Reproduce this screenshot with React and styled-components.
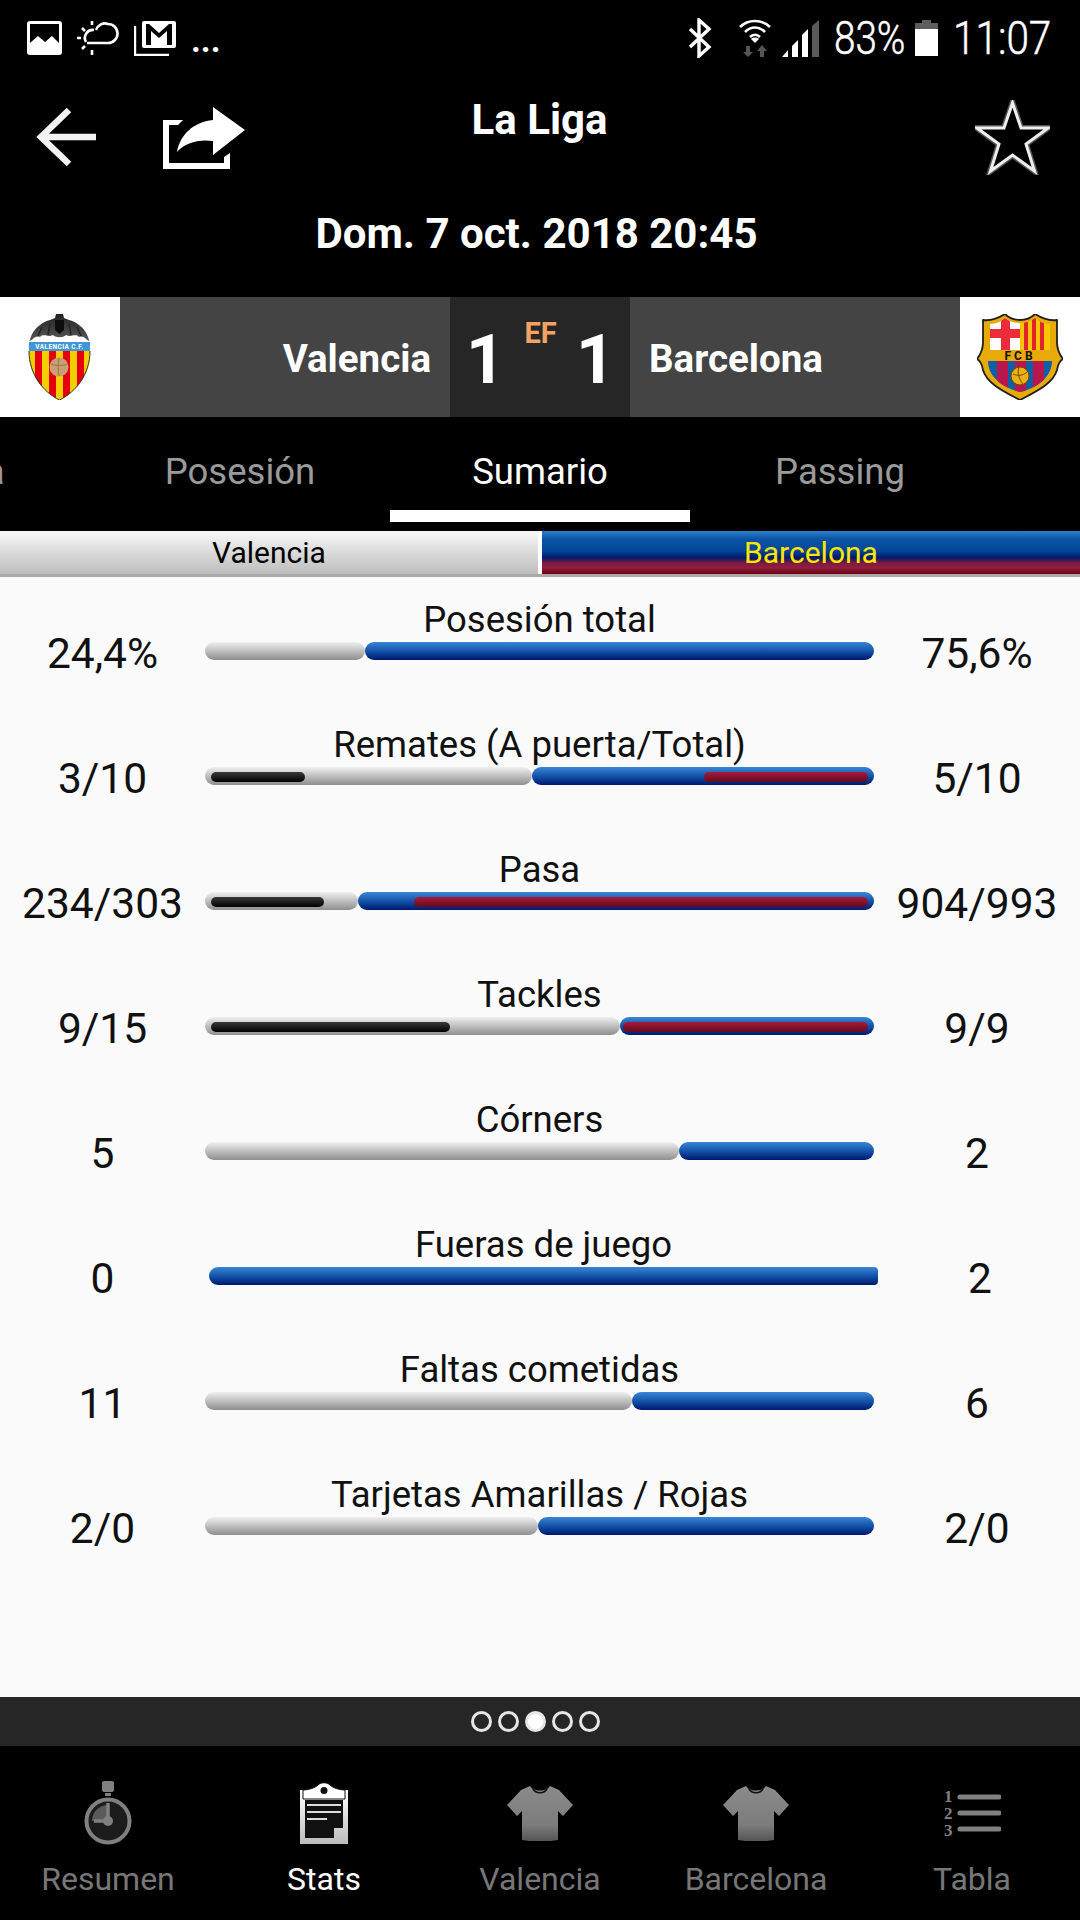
import React from 'react'
import styled, { createGlobalStyle } from 'styled-components'

const Global = createGlobalStyle`
	html, body {
		margin: 0;
		padding: 0;
		background: #000;
	}
	* {
		box-sizing: border-box;
	}
`

const Page = styled.div`
	width: 1080px;
	height: 1920px;
	display: flex;
	flex-direction: column;
	overflow: hidden;
	background: #000;
	font-family: Roboto, "Noto Sans", sans-serif;
`

const StatusBar = styled.div`
	height: 60px;
	display: flex;
	align-items: center;
	padding: 16px 30px 0 27px;
	color: #fff;
`

const StatusLeft = styled.div`
	display: flex;
	align-items: center;
	gap: 15px;
	flex: 1;
`

const Dots = styled.span`
	font-size: 34px;
	font-weight: 700;
	line-height: 34px;
	margin-top: 4px;
`

const StatusRight = styled.div`
	display: flex;
	align-items: center;
`

const Gap = styled.span`
	width: ${p => p.$w}px;
`

const Narrow = styled.span`
	display: inline-block;
	width: ${p => p.$w}px;
	font-size: 46px;
	font-weight: 300;
	line-height: 46px;
	white-space: nowrap;
	transform: scaleX(${p => p.$scale});
	transform-origin: left center;
	-webkit-text-stroke: 0.5px #fff;
`

const Header = styled.div`
	padding: 40px 30px 40px 35px;
`

const Toolbar = styled.div`
	display: grid;
	grid-template-columns: 1fr auto 1fr;
	height: 75px;
`

const ToolLeft = styled.div`
	display: flex;
	align-items: flex-start;
	gap: 66px;
	padding-top: 7px;
`

const ToolRight = styled.div`
	display: flex;
	justify-content: flex-end;
`

const Title = styled.div`
	color: #fff;
	font-size: 42px;
	font-weight: 700;
	line-height: 40px;
	transform: translateX(-3px);
`

const DateLine = styled.div`
	margin: 36px 0 0 -12px;
	color: #fff;
	font-size: 42px;
	font-weight: 700;
	line-height: 46px;
	text-align: center;
`

const MatchStrip = styled.div`
	height: 120px;
	display: flex;
	background: #444;
`

const Crest = styled.div`
	width: ${p => p.$w}px;
	flex-shrink: 0;
	background: #fff;
	display: flex;
	align-items: center;
	justify-content: ${p => p.$end ? 'flex-end' : 'flex-start'};
	padding: 0 ${p => p.$end ? 17 : 0}px 0 ${p => p.$end ? 0 : 28}px;
`

const TeamName = styled.div`
	flex: 1;
	display: flex;
	align-items: center;
	justify-content: ${p => p.$right ? 'flex-start' : 'flex-end'};
	padding: 2px 19px 0;
	color: #fff;
	font-size: 38.5px;
	font-weight: 700;
`

const Score = styled.div`
	width: 180px;
	display: flex;
	justify-content: space-between;
	background: #262626;
	padding: 0 15px 0 16px;
	color: #fff;
`

const Goal = styled.div`
	font-size: 68px;
	font-weight: 700;
	line-height: 122px;
	padding-top: 2px;
`

const Period = styled.div`
	color: #f4a262;
	font-size: 29px;
	font-weight: 700;
	line-height: 30px;
	padding-top: 21px;
`

const Tabs = styled.div`
	height: 114px;
	display: flex;
	justify-content: center;
`

const Tab = styled.div`
	width: 300px;
	flex-shrink: 0;
	display: flex;
	align-items: flex-start;
	justify-content: center;
	padding-top: 35px;
	height: 105px;
	white-space: nowrap;
	color: ${p => p.$active ? '#fff' : '#9a9a9a'};
	font-size: 36.5px;
	line-height: 40px;
	border-bottom: 12px solid ${p => p.$active ? '#fff' : 'transparent'};
`

const TeamHeads = styled.div`
	height: 46px;
	display: flex;
	gap: 4px;
	background: #fff;
	border-bottom: 3px solid #aaa;
`

const TeamHead = styled.div`
	height: 43px;
	width: ${p => p.$w}px;
	flex-shrink: 0;
	text-align: center;
	font-size: 30px;
	line-height: 43px;
	color: ${p => p.$barca ? '#ffe600' : '#000'};
	background: ${p => p.$barca
		? 'linear-gradient(#2f7fcd 0%, #0b55a5 18%, #00479a 45%, #001a68 62%, #7a1a44 74%, #8f1f3f 85%, #6e0011 100%)'
		: 'linear-gradient(#f8f8f8, #bdbdbd)'};
`

const Stats = styled.div`
	flex: 1;
	background: #fafafa;
	padding-top: 24px;
`

const StatRow = styled.div`
	height: 125px;
	display: grid;
	grid-template-columns: 205px 669px 206px;
`

const Value = styled.div`
	text-align: center;
	font-size: 42.5px;
	line-height: 44px;
	color: #111;
	padding-top: 31px;
	white-space: nowrap;
	transform: translateX(${p => p.$nudge || 0}px);
`

const StatBody = styled.div`
	transform: translateX(${p => p.$nudge || 0}px);
`

const StatLabel = styled.div`
	text-align: center;
	font-size: 36.5px;
	line-height: 38px;
	height: 41px;
	color: #111;
	white-space: nowrap;
`

const Track = styled.div`
	height: 18px;
	display: flex;
`

const Segment = styled.div`
	position: relative;
	height: 18px;
	border-radius: ${p => p.$square ? '9px 4px 4px 9px' : '9px'};
	background: ${p => p.$away
		? 'linear-gradient(#3b86d6, #0f4ea4 55%, #00176e)'
		: 'linear-gradient(#f0f0f0, #8e8e8e)'};
`

const Inner = styled.div`
	position: absolute;
	top: 5px;
	height: 10px;
	border-radius: 5px;
	background: ${p => p.$away
		? 'linear-gradient(#a81a3c, #620a1e)'
		: 'linear-gradient(#3a3a3a, #000)'};
`

const Pager = styled.div`
	height: 49px;
	display: flex;
	align-items: center;
	justify-content: center;
	gap: 6px;
	padding-right: 10px;
	background: #262626;
`

const PagerDot = styled.div`
	width: 21px;
	height: 21px;
	border-radius: 50%;
	border: 3px solid #e6e6e6;
	background: ${p => p.$on ? '#fff' : 'transparent'};
`

const BottomNav = styled.div`
	height: 174px;
	display: grid;
	grid-template-columns: repeat(5, 216px);
	padding-top: 27px;
`

const NavItem = styled.div`
	display: flex;
	flex-direction: column;
	align-items: center;
	color: ${p => p.$active ? '#fff' : '#777'};
	font-size: 32px;
	line-height: 40px;
`

const NavIcon = styled.div`
	height: 80px;
	display: flex;
	align-items: center;
	justify-content: center;
	margin-bottom: 6px;
`

const GalleryIcon = () => (
	<svg width="35" height="34" viewBox="0 0 35 34">
		<rect x="0" y="0" width="35" height="34" rx="3" fill="#fff" />
		<path d="M3 3H32V22L25 15 18 21 11 15 3 22Z" fill="#000" />
	</svg>
)

const WeatherIcon = () => (
	<svg width="42" height="34" viewBox="0 0 42 34" fill="none" stroke="#fff" strokeWidth="2.6">
		<path d="M10 22H31A9.500 9.500 0 0 0 31 3C26 1 21 4 19 9" />
		<path d="M17 9A8 8 0 0 0 9 21" />
		<path d="M15 0v4M15 29v5M0 17h4M5 7l3 3M5 28l3-3" />
	</svg>
)

const MailIcon = () => (
	<svg width="42" height="36" viewBox="0 0 42 36">
		<path d="M1 6V35H35" fill="none" stroke="#fff" strokeWidth="2.4" />
		<rect x="8" y="1" width="34" height="27" rx="2" fill="#fff" />
		<path d="M12 4h3L25 13 35 4h3V25H33V11L25 18 17 11V25H12Z" fill="#000" />
	</svg>
)

const BluetoothIcon = () => (
	<svg width="24" height="40" viewBox="0 0 24 40" fill="none" stroke="#fff" strokeWidth="3.4">
		<path d="M2 11 21 29 11 38V2L21 11 2 29" />
	</svg>
)

const WifiIcon = () => (
	<svg width="34" height="38" viewBox="0 0 34 38">
		<g fill="none" stroke="#fff" strokeWidth="2.6">
			<path d="M2 8C10 0 24 0 32 8" />
			<path d="M7 13C13 7 21 7 27 13" />
			<path d="M12 18C15 15 19 15 22 18" />
		</g>
		<path d="M17 24 13 20C15 18 19 18 21 20Z" fill="#fff" />
		<path d="M8 27H12V33H15L10 38 5 33H8Z" fill="#555" />
		<path d="M22 38H26V32H29L24 26 19 32H22Z" fill="#555" />
	</svg>
)

const SignalIcon = () => (
	<svg width="37" height="37" viewBox="0 0 37 37">
		<path d="M0 37 6 30V37Z" fill="#fff" />
		<path d="M10 37V26L16 20V37Z" fill="#fff" />
		<path d="M20 37V15L26 9V37Z" fill="#fff" />
		<path d="M30 37V6L37 0V37Z" fill="#5a5a5a" />
	</svg>
)

const BatteryIcon = () => (
	<svg width="23" height="36" viewBox="0 0 23 36">
		<path d="M7 0H16V3H23V9H0V3H7Z" fill="#5c5c5c" />
		<rect x="0" y="9" width="23" height="27" fill="#fff" />
	</svg>
)

const BackIcon = () => (
	<svg width="62" height="62" viewBox="0 0 62 62" fill="none" stroke="#f2f2f2" strokeWidth="6.500">
		<path d="M61 30H6M34 3 6 30 34 57" />
	</svg>
)

const ShareIcon = () => (
	<svg width="82" height="62" viewBox="0 0 82 62" fill="#fff">
		<path d="M0 13H20L15 18H6V56H61V50L67 46V62H0Z" />
		<path d="M50 0 82 23 50 48V34C35 32 22 36 14 45 17 28 30 15 50 13Z" />
	</svg>
)

const StarIcon = () => (
	<svg width="75" height="75" viewBox="0 0 75 75">
		<path
			d="M37.500 3 46 28H73L51 44 59.500 71 37.500 55 15.500 71 24 44 2 28H29Z"
			fill="#000"
			stroke="#555"
			strokeWidth="6"
		/>
		<path
			d="M37.500 3 46 28H73L51 44 59.500 71 37.500 55 15.500 71 24 44 2 28H29Z"
			fill="#000"
			stroke="#eee"
			strokeWidth="3"
		/>
	</svg>
)

const ValenciaCrest = () => (
	<svg width="63" height="86" viewBox="0 0 63 86">
		<defs>
			<clipPath id="vcfShield">
				<path d="M1 20H62V40C62 60 48 78 31.500 86 15 78 1 60 1 40Z" />
			</clipPath>
			<linearGradient id="batWing" x1="0" y1="0" x2="0" y2="1">
				<stop offset="0" stopColor="#222" />
				<stop offset="1" stopColor="#6a6a6a" />
			</linearGradient>
		</defs>
		<path d="M1 36C0 22 8 10 22 6L27 4 28 0H35L36 4 41 6C55 10 63 22 62 36Z" fill="url(#batWing)" />
		<path d="M27 6H36L36 16 31.500 20 27 16Z" fill="#0c0c0c" />
		<path d="M9 24 14 13M54 24 49 13M20 21 22 10M43 21 41 10" stroke="#222" strokeWidth="1.500" />
		<g clipPath="url(#vcfShield)">
			<path d="M0 28C6 26 6 21 12 23 16 19 20 24 25 21 28 24 35 24 38 21 43 24 47 19 51 23 57 21 57 26 63 28V32H0Z" fill="#fff" />
			<rect x="0" y="28" width="63" height="9" fill="#3f97d6" />
			<rect x="0" y="37" width="63" height="50" fill="#f6cd00" />
			<rect x="7" y="37" width="7" height="50" fill="#e4000c" />
			<rect x="21" y="37" width="7" height="50" fill="#e4000c" />
			<rect x="35" y="37" width="7" height="50" fill="#e4000c" />
			<rect x="49" y="37" width="7" height="50" fill="#e4000c" />
		</g>
		<text x="31.500" y="35" textAnchor="middle" fontSize="6.500" fontWeight="700" fill="#fff" fontFamily="Roboto, sans-serif" letterSpacing="0.400">VALENCIA C.F.</text>
		<circle cx="31" cy="53" r="9.500" fill="#c8a074" />
		<path d="M23 50C28 52 34 52 40 50M31 44C30 50 30 56 31 62" fill="none" stroke="#9b7548" strokeWidth="1" />
		<path d="M1 37C1 60 15 78 31.500 86 48 78 62 60 62 37" fill="none" stroke="#333" strokeWidth="1" />
	</svg>
)

const BarcaCrest = () => (
	<svg width="86" height="86" viewBox="0 0 86 86">
		<defs>
			<clipPath id="fcbLower">
				<path d="M11 47H75C75 63 60 74 43 78 26 74 11 63 11 47Z" />
			</clipPath>
			<clipPath id="fcbUpper">
				<path d="M13 10C20 10 24 7 28 4 33 8 38 9 43 9 48 9 53 8 58 4 62 7 66 10 73 10V36H13Z" />
			</clipPath>
		</defs>
		<path
			d="M6 6C13 7 20 5 28 0 33 5 38 6 43 6 48 6 53 5 58 0 66 5 73 7 80 6L80 28C80 34 82 40 86 45 81 48 81 52 80 56 76 70 58 78 43 86 28 78 10 70 6 56 5 52 5 48 0 45 4 40 6 34 6 28Z"
			fill="#e7aa08"
			stroke="#1e1e1e"
			strokeWidth="1.800"
			strokeLinejoin="round"
		/>
		<g clipPath="url(#fcbUpper)">
			<rect x="13" y="4" width="30" height="32" fill="#fff" />
			<rect x="24" y="4" width="9" height="32" fill="#ee2b3a" />
			<rect x="13" y="15" width="30" height="9" fill="#ee2b3a" />
			<rect x="43" y="4" width="30" height="32" fill="#f7c600" />
			<rect x="47" y="4" width="4" height="32" fill="#e2232e" />
			<rect x="55" y="4" width="4" height="32" fill="#e2232e" />
			<rect x="63" y="4" width="4" height="32" fill="#e2232e" />
		</g>
		<text x="43" y="46" textAnchor="middle" fontSize="12" fontWeight="700" fill="#111" fontFamily="Roboto, sans-serif" letterSpacing="3">FCB</text>
		<g clipPath="url(#fcbLower)">
			<rect x="11" y="47" width="64" height="32" fill="#0f5ea8" />
			<rect x="20" y="47" width="11" height="32" fill="#b9164f" />
			<rect x="38" y="47" width="11" height="32" fill="#b9164f" />
			<rect x="56" y="47" width="11" height="32" fill="#b9164f" />
		</g>
		<circle cx="43" cy="62" r="9" fill="#eeb010" stroke="#6e4d00" strokeWidth="1" />
		<path d="M36 60C40 62 46 62 50 58M42 53C40 59 42 65 46 70" fill="none" stroke="#6e4d00" strokeWidth="1" />
	</svg>
)

const NAV_GREY = '#808080'

const StopwatchIcon = () => (
	<svg width="48" height="64" viewBox="0 0 48 64">
		<rect x="18" y="0" width="12" height="11" rx="2" fill={NAV_GREY} />
		<rect x="21" y="12" width="6" height="3" fill={NAV_GREY} />
		<circle cx="24" cy="40" r="21.500" fill="#1c1c1c" stroke={NAV_GREY} strokeWidth="4" />
		<path d="M24 24V40H8C8 31 15 24 24 24Z" fill="#5a5a5a" />
		<path d="M24 22V40H10" fill="none" stroke={NAV_GREY} strokeWidth="3.500" />
		<circle cx="24" cy="40" r="5" fill={NAV_GREY} />
	</svg>
)

const ClipboardIcon = () => (
	<svg width="48" height="62" viewBox="0 0 48 62">
		<defs>
			<linearGradient id="clipFill" x1="0" y1="0" x2="0" y2="1">
				<stop offset="0" stopColor="#fff" />
				<stop offset="1" stopColor="#bbb" />
			</linearGradient>
		</defs>
		<path d="M0 8H48V62H0Z" fill="url(#clipFill)" />
		<path d="M5 18H43V46H34V56H5Z" fill="#111" />
		<path d="M3 8C8 8 15 6 18 3 21 0 27 0 30 3 33 6 40 8 45 8V17H3Z" fill="#fff" stroke="#111" strokeWidth="1" />
		<circle cx="24" cy="8.500" r="3.500" fill="#111" />
		<path d="M7 23H41M7 30H41M7 37H27" stroke="#ddd" strokeWidth="2.200" />
	</svg>
)

const ShirtIcon = ({ id }) => (
	<svg width="66" height="55" viewBox="0 0 66 55">
		<defs>
			<linearGradient id={id} x1="0" y1="0" x2="0" y2="1">
				<stop offset="0" stopColor="#8a8a8a" />
				<stop offset="0.7" stopColor="#7c7c7c" />
				<stop offset="1" stopColor="#555" />
			</linearGradient>
		</defs>
		<path
			d="M23 0C26 6 40 6 43 0L52 4 66 19 56 30 51 25V54C40 56 26 56 15 54V25L10 30 0 19 14 4Z"
			fill={`url(#${id})`}
		/>
		<path d="M26 3C29 8 37 8 40 3" fill="none" stroke="#111" strokeWidth="1.500" />
	</svg>
)

const TableIcon = () => (
	<svg width="58" height="50" viewBox="0 0 58 50">
		<g fill={NAV_GREY} fontFamily="'Liberation Serif', serif" fontWeight="700" fontSize="17">
			<text x="1" y="14">1</text>
			<text x="1" y="31">2</text>
			<text x="1" y="48">3</text>
		</g>
		<g stroke={NAV_GREY} strokeWidth="5" strokeLinecap="round">
			<path d="M17 9H56M17 25H56M17 41H56" />
		</g>
	</svg>
)

const stats = [
	{ label: 'Posesión total', home: '24,4%', away: '75,6%', split: 23.9 },
	{ label: 'Remates (A puerta/Total)', home: '3/10', away: '5/10', split: 48.9, homeIn: [6, 100], awayFrom: 172 },
	{ label: 'Pasa', home: '234/303', away: '904/993', split: 22.8, homeIn: [6, 119], awayFrom: 56 },
	{ label: 'Tackles', home: '9/15', away: '9/9', split: 62, homeIn: [6, 245], awayFrom: 3 },
	{ label: 'Córners', home: '5', away: '2', split: 70.9 },
	{ label: 'Fueras de juego', home: '0', away: '2', split: 0, nudge: 4 },
	{ label: 'Faltas cometidas', home: '11', away: '6', split: 63.9 },
	{ label: 'Tarjetas Amarillas / Rojas', home: '2/0', away: '2/0', split: 49.8 },
]

const navItems = [
	{ label: 'Resumen', icon: <StopwatchIcon /> },
	{ label: 'Stats', icon: <ClipboardIcon />, active: true },
	{ label: 'Valencia', icon: <ShirtIcon id="shirtHome" /> },
	{ label: 'Barcelona', icon: <ShirtIcon id="shirtAway" /> },
	{ label: 'Tabla', icon: <TableIcon /> },
]

const StatBar = ({ stat }) => {
	const { split, homeIn, awayFrom } = stat
	return (
		<Track>
			{split > 0 && (
				<Segment style={{ width: `${split}%` }}>
					{homeIn && <Inner style={{ left: homeIn[0], width: homeIn[1] - homeIn[0] }} />}
				</Segment>
			)}
			<Segment $away $square={split === 0} style={{ width: `${100 - split}%` }}>
				{awayFrom !== undefined && <Inner $away style={{ left: awayFrom, right: 6 }} />}
			</Segment>
		</Track>
	)
}

export default function App() {
	return (
		<Page>
			<Global />
			<StatusBar>
				<StatusLeft>
					<GalleryIcon />
					<WeatherIcon />
					<MailIcon />
					<Dots>...</Dots>
				</StatusLeft>
				<StatusRight>
					<BluetoothIcon />
					<Gap $w={26} />
					<WifiIcon />
					<Gap $w={10} />
					<SignalIcon />
					<Gap $w={15} />
					<Narrow $w={81} $scale={0.84}>83%</Narrow>
					<BatteryIcon />
					<Gap $w={15} />
					<Narrow $w={97} $scale={0.88}>11:07</Narrow>
				</StatusRight>
			</StatusBar>
			<Header>
				<Toolbar>
					<ToolLeft>
						<BackIcon />
						<ShareIcon />
					</ToolLeft>
					<Title>La Liga</Title>
					<ToolRight>
						<StarIcon />
					</ToolRight>
				</Toolbar>
				<DateLine>Dom. 7 oct. 2018 20:45</DateLine>
			</Header>
			<MatchStrip>
				<Crest $w={120}>
					<ValenciaCrest />
				</Crest>
				<TeamName>Valencia</TeamName>
				<Score>
					<Goal>1</Goal>
					<Period>EF</Period>
					<Goal>1</Goal>
				</Score>
				<TeamName $right>Barcelona</TeamName>
				<Crest $w={120} $end>
					<BarcaCrest />
				</Crest>
			</MatchStrip>
			<Tabs>
				<Tab>Portería</Tab>
				<Tab>Posesión</Tab>
				<Tab $active>Sumario</Tab>
				<Tab>Passing</Tab>
				<Tab />
			</Tabs>
			<TeamHeads>
				<TeamHead $w={538}>Valencia</TeamHead>
				<TeamHead $w={538} $barca>Barcelona</TeamHead>
			</TeamHeads>
			<Stats>
				{stats.map(stat => (
					<StatRow key={stat.label}>
						<Value>{stat.home}</Value>
						<StatBody $nudge={stat.nudge}>
							<StatLabel>{stat.label}</StatLabel>
							<StatBar stat={stat} />
						</StatBody>
						<Value $nudge={stat.nudge && 3}>{stat.away}</Value>
					</StatRow>
				))}
			</Stats>
			<Pager>
				{[0, 1, 2, 3, 4].map(i => <PagerDot key={i} $on={i === 2} />)}
			</Pager>
			<BottomNav>
				{navItems.map(item => (
					<NavItem key={item.label} $active={item.active}>
						<NavIcon>{item.icon}</NavIcon>
						{item.label}
					</NavItem>
				))}
			</BottomNav>
		</Page>
	)
}
